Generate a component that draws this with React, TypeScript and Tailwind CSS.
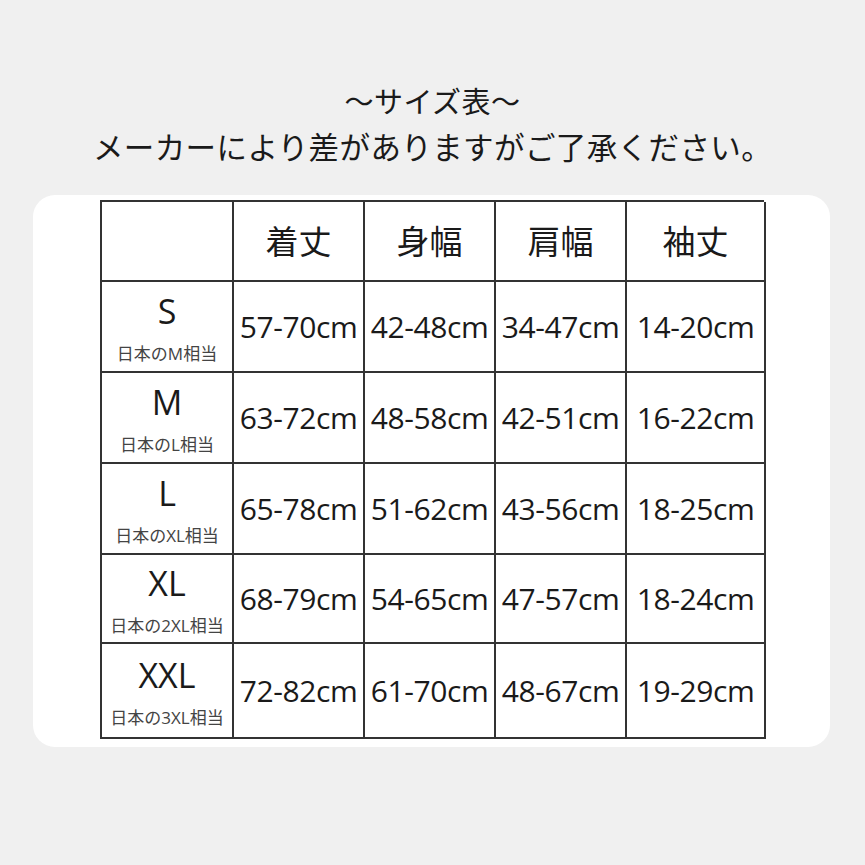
import React from "react";

const rows = [
  { size: "S", sub: "日本のM相当", vals: ["57-70cm", "42-48cm", "34-47cm", "14-20cm"] },
  { size: "M", sub: "日本のL相当", vals: ["63-72cm", "48-58cm", "42-51cm", "16-22cm"] },
  { size: "L", sub: "日本のXL相当", vals: ["65-78cm", "51-62cm", "43-56cm", "18-25cm"] },
  { size: "XL", sub: "日本の2XL相当", vals: ["68-79cm", "54-65cm", "47-57cm", "18-24cm"] },
  { size: "XXL", sub: "日本の3XL相当", vals: ["72-82cm", "61-70cm", "48-67cm", "19-29cm"] },
];

const heads = ["着丈", "身幅", "肩幅", "袖丈"];

const jp = { fontFamily: '"Open Sans", "Noto Sans CJK JP", sans-serif' };

export default function App() {
  return (
    <div className="w-[865px] h-[865px] bg-[#f0f0f0] overflow-hidden text-[#1a1a1a]" style={jp}>
      <div className="pt-[82px] flex flex-col items-center">
        <div className="text-[29px] leading-[40px] tracking-[0.5px]">～サイズ表～</div>
        <div className="text-[30.5px] leading-[44px] mt-[3px] tracking-[0.4px]">
          メーカーにより差がありますがご了承ください。
        </div>
      </div>
      <div className="ml-[33px] mt-[26px] w-[797px] h-[552px] bg-white rounded-[22px] pt-[5px] pl-[67px]">
        <div className="grid grid-cols-[132px_131px_131px_131px_139px] grid-rows-[80px_91px_91px_91px_89px_95px] border-t-2 border-l-2 border-[#333] w-[664px]">
          <div className="border-r-2 border-b-2 border-[#333]" />
          {heads.map((h) => (
            <div
              key={h}
              className="border-r-2 border-b-2 border-[#333] flex items-center justify-center text-[33px]"
              style={{ fontFamily: '"Noto Sans CJK JP", sans-serif' }}
            >
              {h}
            </div>
          ))}
          {rows.map((r) => (
            <React.Fragment key={r.size}>
              <div className="border-r-2 border-b-2 border-[#333] flex flex-col items-center justify-center pt-[2px]">
                <div className="text-[34px] leading-[40px]" style={{ fontFamily: '"Open Sans", sans-serif' }}>
                  {r.size}
                </div>
                <div className="text-[17px] leading-[20px] mt-[13px] text-[#444]">{r.sub}</div>
              </div>
              {r.vals.map((v, i) => (
                <div
                  key={i}
                  className="border-r-2 border-b-2 border-[#333] flex items-center justify-center text-[30px] tracking-[-0.4px] whitespace-nowrap"
                  style={{ fontFamily: '"Open Sans", sans-serif' }}
                >
                  {v}
                </div>
              ))}
            </React.Fragment>
          ))}
        </div>
      </div>
    </div>
  );
}
